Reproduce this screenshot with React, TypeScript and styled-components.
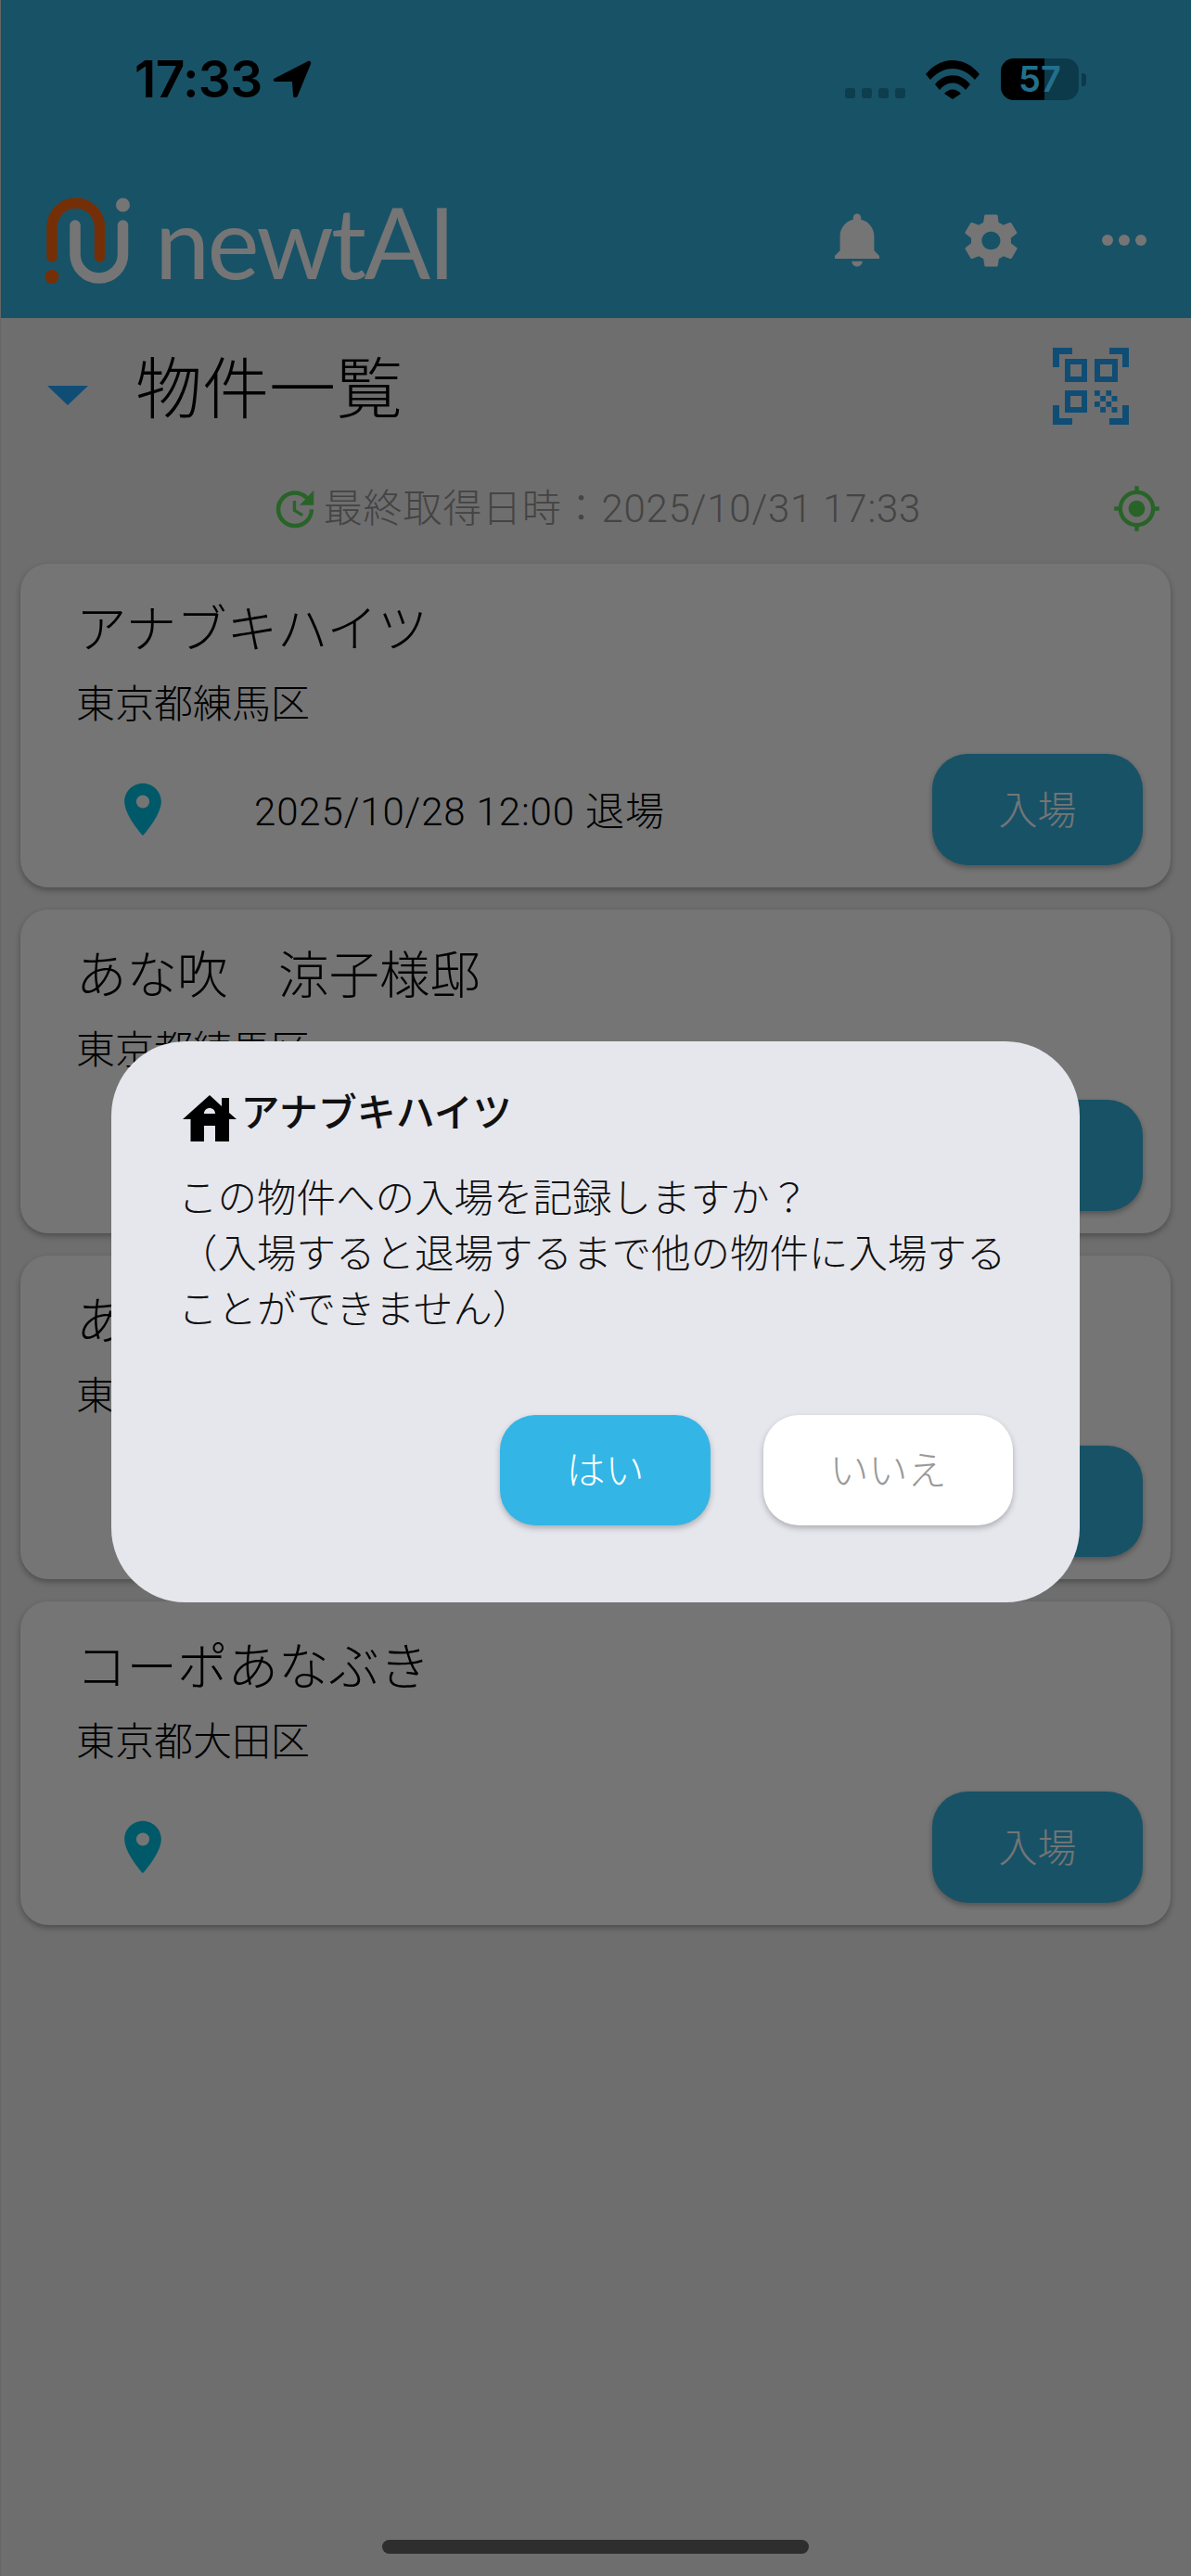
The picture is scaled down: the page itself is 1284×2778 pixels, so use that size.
import React from "react";
import styled, { createGlobalStyle } from "styled-components";
import { IoMdNotifications, IoMdSettings } from "react-icons/io";
import { MdGpsFixed, MdLocationOn, MdUpdate } from "react-icons/md";

const GlobalStyle = createGlobalStyle`
  html, body { margin: 0; padding: 0; background: #efefef; }
  * { box-sizing: border-box; }
`;

const Page = styled.div`
  position: relative;
  width: 1284px;
  height: 2778px;
  overflow: hidden;
  background: #efefef;
  color: #000;
  font-family: Roboto, "Noto Sans CJK JP", sans-serif;
  font-weight: 300;
`;

const Header = styled.header`
  height: 343px;
  background: #36b4e0;
  display: flex;
  flex-direction: column;
`;

const StatusBar = styled.div`
  position: relative;
  z-index: 3;
  height: 199px;
  padding: 63px 113px 0 145px;
  display: flex;
  justify-content: space-between;
  align-items: flex-start;
`;

const TimeGroup = styled.div`
  display: flex;
  align-items: center;
  gap: 11px;
  height: 45px;
`;

const Time = styled.span`
  font-family: Inter, sans-serif;
  font-weight: 600;
  font-size: 55px;
  line-height: 47px;
  letter-spacing: -0.6px;
`;

const StatusIcons = styled.div`
  display: flex;
  align-items: flex-start;
`;

const Signal = styled.div`
  display: flex;
  gap: 7px;
  margin: 32px 22px 0 0;
`;

const SignalDot = styled.span`
  width: 11px;
  height: 11px;
  border-radius: 3px;
  background: #0e3d4e;
`;

const Wifi = styled.svg`
  width: 58px;
  height: 42px;
  margin: 2px 23px 0 0;
`;

const Battery = styled.div`
  position: relative;
  width: 84px;
  height: 45px;
  border-radius: 14px;
  overflow: hidden;
  background: linear-gradient(to right, #000 0, #000 47px, #0c3a4b 47px);
  color: #22708c;
  font-family: Inter, sans-serif;
  font-weight: 600;
  font-size: 38px;
  line-height: 45px;
  text-align: center;
`;

const BatteryNub = styled.span`
  width: 5px;
  height: 14px;
  margin: 16px 0 0 3px;
  border-radius: 0 4px 4px 0;
  background: #0c3a4b;
`;

const Toolbar = styled.div`
  height: 144px;
  padding: 0 0 24px 48px;
  display: flex;
  align-items: center;
`;

const Brand = styled.div`
  display: flex;
  align-items: flex-end;
  gap: 27px;
  height: 93px;
`;

const Wordmark = styled.span`
  margin-bottom: 3px;
  color: #fff;
  font-family: Lato, sans-serif;
  font-weight: 400;
  font-size: 106px;
  line-height: 85px;
  letter-spacing: -2.6px;
`;

const ToolSlots = styled.div`
  margin-left: auto;
  display: flex;
`;

const ToolSlot = styled.div`
  width: 144px;
  height: 72px;
  color: #fff;
  display: flex;
  align-items: center;
  justify-content: center;
`;

const TitleRow = styled.div`
  height: 146px;
  padding: 0 67px 0 51px;
  display: flex;
  align-items: center;
`;

const Caret = styled.span`
  width: 0;
  height: 0;
  margin-top: 20px;
  border-left: 22px solid transparent;
  border-right: 22px solid transparent;
  border-top: 21px solid #21a8ff;
`;

const Title = styled.h1`
  margin: 10px 0 0 51px;
  font-size: 72px;
  line-height: 80px;
  font-weight: 300;
`;

const QrIcon = styled.svg`
  margin-left: auto;
  width: 82px;
  height: 83px;
  fill: #21a8ff;
`;

const SyncRow = styled.div`
  height: 119px;
  display: grid;
  grid-template-columns: 1fr auto 1fr;
  align-items: center;
`;

const SyncText = styled.div`
  grid-column: 2;
  display: flex;
  align-items: center;
  gap: 4px;
  color: #949494;
  font-size: 42px;
  line-height: 50px;
  letter-spacing: 0.8px;
`;

const GreenIcon = styled.span`
  display: flex;
  color: #58d858;
`;

const LocateWrap = styled(GreenIcon)`
  justify-self: end;
  margin-right: 32px;
`;

const CardList = styled.div`
  padding: 0 22px;
  display: flex;
  flex-direction: column;
  gap: 24px;
`;

const Card = styled.article`
  height: 349px;
  padding: 41px 30px 24px 60px;
  border-radius: 30px;
  background: #fff;
  box-shadow: 0 3px 6px rgba(0, 0, 0, 0.3);
  display: flex;
  flex-direction: column;
`;

const CardTitle = styled.div`
  font-size: 54.5px;
  line-height: 60px;
`;

const CardAddress = styled.div`
  margin-top: 21px;
  font-size: 42px;
  line-height: 60px;
`;

const CardActions = styled.div`
  margin-top: auto;
  display: flex;
  align-items: center;
`;

const PinWrap = styled.span`
  display: flex;
  margin-left: 38px;
  color: #00c3e2;
`;

const LastVisit = styled.span`
  margin-left: 86px;
  padding-top: 5px;
  font-size: 42px;
  line-height: 50px;
  font-weight: 300;
  letter-spacing: 0.87px;
`;

const EnterButton = styled.button`
  margin-left: auto;
  width: 227px;
  height: 120px;
  padding: 0 0 5px;
  border: 0;
  border-radius: 38px;
  background: #36b4e0;
  color: #fff;
  font: inherit;
  font-size: 42px;
  box-shadow: 0 3px 6px rgba(0, 0, 0, 0.3);
`;

const Scrim = styled.div`
  position: absolute;
  inset: 0;
  z-index: 2;
  border-left: 1px solid #666;
  background: rgba(0, 0, 0, 0.54);
`;

const Dialog = styled.section`
  position: absolute;
  z-index: 3;
  left: 120px;
  top: 1123px;
  width: 1044px;
  height: 605px;
  padding: 58px 72px 83px 72px;
  border-radius: 80px;
  background: #e6e7ed;
  display: flex;
  flex-direction: column;
`;

const DialogHead = styled.div`
  display: flex;
  align-items: flex-start;
  gap: 4.5px;
  height: 50px;
  padding-left: 5px;
`;

const HouseIcon = styled.svg`
  width: 58px;
  height: 50px;
`;

const DialogTitle = styled.h2`
  margin: -5px 0 0;
  font-size: 42px;
  line-height: 50px;
  font-weight: 500;
  color: #111;
`;

const DialogBody = styled.p`
  margin: 32px 0 0;
  font-size: 42.5px;
  line-height: 60px;
  font-weight: 300;
  color: #111;
  white-space: pre-line;
`;

const DialogActions = styled.div`
  margin-top: auto;
  display: flex;
  justify-content: flex-end;
  gap: 57px;
`;

const DialogButton = styled.button<{ $primary?: boolean }>`
  width: ${(p) => (p.$primary ? 227 : 269)}px;
  height: 119px;
  padding: 0 0 6px;
  border: 0;
  border-radius: 38px;
  background: ${(p) => (p.$primary ? "#33b5e6" : "#fff")};
  color: ${(p) => (p.$primary ? "#fff" : "#999")};
  font: inherit;
  font-size: 42px;
  box-shadow: 0 3px 6px rgba(0, 0, 0, 0.25);
`;

const HomeBar = styled.div`
  position: absolute;
  z-index: 3;
  left: 412px;
  top: 2739px;
  width: 460px;
  height: 15px;
  border-radius: 8px;
  background: #2e2e2e;
`;

type Property = { name: string; address: string; visit?: string };

const properties: Property[] = [
  { name: "アナブキハイツ", address: "東京都練馬区", visit: "2025/10/28 12:00 退場" },
  { name: "あな吹　涼子様邸", address: "東京都練馬区" },
  { name: "あなぶきハイツ", address: "東京都大田区" },
  { name: "コーポあなぶき", address: "東京都大田区" },
];

const LogoMark = () => (
  <svg width="92" height="93" viewBox="48 213 92 93" fill="none" strokeLinecap="round">
    <path d="M56 277V245a25.75 26 0 0 1 51.5 0V277" stroke="#ff6611" strokeWidth="11.5" />
    <circle cx="56" cy="298.5" r="7.5" fill="#ff6611" />
    <path d="M81 243V274a25.75 26 0 0 0 51.5 0V243" stroke="#fff" strokeWidth="11.5" />
    <circle cx="132.5" cy="221" r="7.5" fill="#fff" />
  </svg>
);

const QrGlyph = () => {
  const cells: [number, number][] = [
    [0, 0], [2, 0], [1, 1], [3, 1], [0, 2], [2, 2], [1, 3], [3, 3],
  ];
  return (
    <QrIcon viewBox="0 0 82 83">
      <path d="M0 0H21V7H7V21H0ZM61 0H82V21H75V7H61ZM0 62H7V76H21V83H0ZM75 62H82V83H61V76H75Z" />
      <path fillRule="evenodd" d="M13 12H37V37H13ZM19 18V31H31V18Z" />
      <path fillRule="evenodd" d="M45 12H70V37H45ZM51 18V31H64V18Z" />
      <path fillRule="evenodd" d="M13 46H37V70H13ZM19 52V64H31V52Z" />
      {cells.map(([c, r]) => (
        <rect key={`${c}-${r}`} x={45 + c * 6.2} y={46 + r * 6} width="5.8" height="5.8" />
      ))}
    </QrIcon>
  );
};

export default function App() {
  return (
    <Page>
      <GlobalStyle />
      <Header>
        <StatusBar>
          <TimeGroup>
            <Time>17:33</Time>
            <svg width="42" height="41" viewBox="0 0 42 41">
              <path
                d="M3 19 38 1c2-1 4 1 3 3L27 38c-1 3-5 3-5 0l-1-15H3c-3 0-3-3 0-4Z"
                fill="#000"
              />
            </svg>
          </TimeGroup>
          <StatusIcons>
            <Signal>
              <SignalDot />
              <SignalDot />
              <SignalDot />
              <SignalDot />
            </Signal>
            <Wifi viewBox="0 0 58 42">
              <path d="M0 15C16-5 42-5 58 15l-5 6C39 5 19 5 5 21Z" fill="#000" />
              <path d="M10 26C20 13 38 13 48 26l-5 6C35 22 23 22 15 32Z" fill="#000" />
              <path d="M20 36c5-6 13-6 18 0l-9 6Z" fill="#000" />
            </Wifi>
            <Battery>57</Battery>
            <BatteryNub />
          </StatusIcons>
        </StatusBar>
        <Toolbar>
          <Brand>
            <LogoMark />
            <Wordmark>newtAI</Wordmark>
          </Brand>
          <ToolSlots>
            <ToolSlot>
              <IoMdNotifications size={70} />
            </ToolSlot>
            <ToolSlot>
              <IoMdSettings size={69} />
            </ToolSlot>
            <ToolSlot>
              <svg width="48" height="12" viewBox="0 0 48 12" fill="currentColor">
                <circle cx="6" cy="6" r="6" />
                <circle cx="24" cy="6" r="6" />
                <circle cx="42" cy="6" r="6" />
              </svg>
            </ToolSlot>
          </ToolSlots>
        </Toolbar>
      </Header>

      <TitleRow>
        <Caret />
        <Title>物件一覧</Title>
        <QrGlyph />
      </TitleRow>

      <SyncRow>
        <SyncText>
          <GreenIcon>
            <MdUpdate size={54} />
          </GreenIcon>
          最終取得日時：2025/10/31 17:33
        </SyncText>
        <LocateWrap>
          <MdGpsFixed size={53} />
        </LocateWrap>
      </SyncRow>

      <CardList>
        {properties.map((p) => (
          <Card key={p.name}>
            <CardTitle>{p.name}</CardTitle>
            <CardAddress>{p.address}</CardAddress>
            <CardActions>
              <PinWrap>
                <MdLocationOn size={68} />
              </PinWrap>
              {p.visit && <LastVisit>{p.visit}</LastVisit>}
              <EnterButton>入場</EnterButton>
            </CardActions>
          </Card>
        ))}
      </CardList>

      <Scrim />

      <Dialog>
        <DialogHead>
          <HouseIcon viewBox="0 0 58 50">
            <path
              fillRule="evenodd"
              fill="#000"
              d="M29 0 42 12V3H50V19L58 26H50V50H35V33H23V50H8.5V26H0ZM23 20H35C35 12 23 12 23 20Z"
            />
          </HouseIcon>
          <DialogTitle>アナブキハイツ</DialogTitle>
        </DialogHead>
        <DialogBody>
          {"この物件への入場を記録しますか？\n（入場すると退場するまで他の物件に入場する\nことができません）"}
        </DialogBody>
        <DialogActions>
          <DialogButton $primary>はい</DialogButton>
          <DialogButton>いいえ</DialogButton>
        </DialogActions>
      </Dialog>

      <HomeBar />
    </Page>
  );
}
